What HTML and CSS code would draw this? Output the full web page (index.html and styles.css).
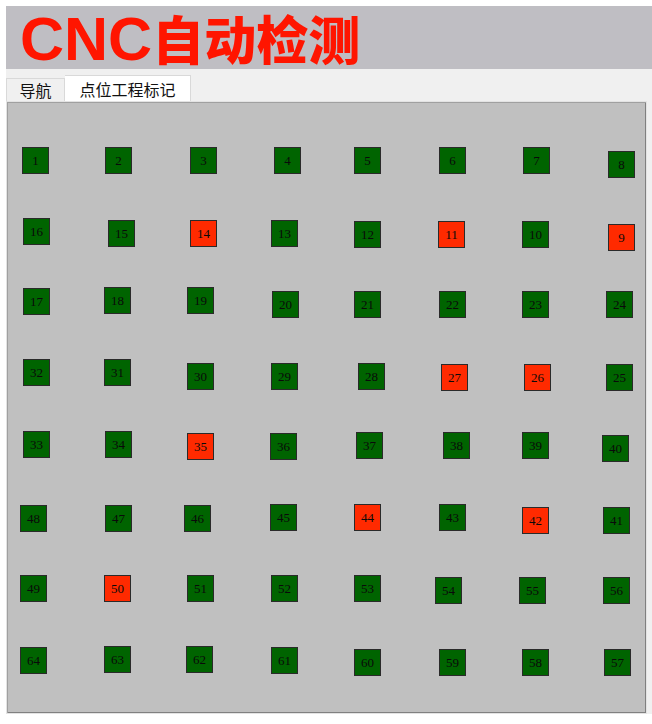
FILE: index.html
```html
<!DOCTYPE html>
<html lang="zh">
<head>
<meta charset="utf-8">
<title>CNC自动检测</title>
<link rel="stylesheet" href="styles.css">
</head>
<body>
<div class="app">
  <header class="header">
    <h1 class="title"><span class="latin">CNC</span><span class="cjk">自动检测</span></h1>
  </header>
  <div class="window">
    <div class="tabs">
      <div class="tab">导航</div>
      <div class="tab active">点位工程标记</div>
    </div>
    <div class="panel">
      <div class="pt" style="left:15px;top:45px">1</div>
      <div class="pt" style="left:98px;top:45px">2</div>
      <div class="pt" style="left:183px;top:45px">3</div>
      <div class="pt" style="left:267px;top:45px">4</div>
      <div class="pt" style="left:347px;top:45px">5</div>
      <div class="pt" style="left:432px;top:45px">6</div>
      <div class="pt" style="left:516px;top:45px">7</div>
      <div class="pt" style="left:601px;top:49px">8</div>

      <div class="pt" style="left:16px;top:116px">16</div>
      <div class="pt" style="left:101px;top:118px">15</div>
      <div class="pt bad" style="left:183px;top:118px">14</div>
      <div class="pt" style="left:264px;top:118px">13</div>
      <div class="pt" style="left:347px;top:119px">12</div>
      <div class="pt bad" style="left:431px;top:119px">11</div>
      <div class="pt" style="left:515px;top:119px">10</div>
      <div class="pt bad" style="left:601px;top:122px">9</div>

      <div class="pt" style="left:16px;top:186px">17</div>
      <div class="pt" style="left:97px;top:185px">18</div>
      <div class="pt" style="left:180px;top:185px">19</div>
      <div class="pt" style="left:265px;top:189px">20</div>
      <div class="pt" style="left:347px;top:189px">21</div>
      <div class="pt" style="left:432px;top:189px">22</div>
      <div class="pt" style="left:515px;top:189px">23</div>
      <div class="pt" style="left:599px;top:189px">24</div>

      <div class="pt" style="left:16px;top:257px">32</div>
      <div class="pt" style="left:97px;top:257px">31</div>
      <div class="pt" style="left:180px;top:261px">30</div>
      <div class="pt" style="left:264px;top:261px">29</div>
      <div class="pt" style="left:351px;top:261px">28</div>
      <div class="pt bad" style="left:434px;top:262px">27</div>
      <div class="pt bad" style="left:517px;top:262px">26</div>
      <div class="pt" style="left:599px;top:262px">25</div>

      <div class="pt" style="left:16px;top:329px">33</div>
      <div class="pt" style="left:98px;top:329px">34</div>
      <div class="pt bad" style="left:180px;top:331px">35</div>
      <div class="pt" style="left:263px;top:331px">36</div>
      <div class="pt" style="left:349px;top:330px">37</div>
      <div class="pt" style="left:436px;top:330px">38</div>
      <div class="pt" style="left:515px;top:330px">39</div>
      <div class="pt" style="left:595px;top:333px">40</div>

      <div class="pt" style="left:13px;top:403px">48</div>
      <div class="pt" style="left:98px;top:403px">47</div>
      <div class="pt" style="left:177px;top:403px">46</div>
      <div class="pt" style="left:263px;top:402px">45</div>
      <div class="pt bad" style="left:347px;top:402px">44</div>
      <div class="pt" style="left:432px;top:402px">43</div>
      <div class="pt bad" style="left:515px;top:405px">42</div>
      <div class="pt" style="left:596px;top:405px">41</div>

      <div class="pt" style="left:13px;top:473px">49</div>
      <div class="pt bad" style="left:97px;top:473px">50</div>
      <div class="pt" style="left:180px;top:473px">51</div>
      <div class="pt" style="left:264px;top:473px">52</div>
      <div class="pt" style="left:347px;top:473px">53</div>
      <div class="pt" style="left:428px;top:475px">54</div>
      <div class="pt" style="left:512px;top:475px">55</div>
      <div class="pt" style="left:596px;top:475px">56</div>

      <div class="pt" style="left:13px;top:545px">64</div>
      <div class="pt" style="left:97px;top:544px">63</div>
      <div class="pt" style="left:179px;top:544px">62</div>
      <div class="pt" style="left:264px;top:545px">61</div>
      <div class="pt" style="left:347px;top:547px">60</div>
      <div class="pt" style="left:432px;top:547px">59</div>
      <div class="pt" style="left:515px;top:547px">58</div>
      <div class="pt" style="left:597px;top:547px">57</div>
    </div>
  </div>
</div>
</body>
</html>
```
FILE: styles.css
```css
html, body {
  margin: 0;
  padding: 0;
  background: #ffffff;
}
.app {
  width: 652px;
  height: 724px;
  padding: 6px 0 0 6px;
  box-sizing: border-box;
  font-family: "Noto Sans CJK SC", "Noto Sans", sans-serif;
}
.header {
  height: 63px;
  background: #bfbec3;
  box-sizing: border-box;
  padding-left: 14px;
  display: flex;
  align-items: center;
}
.title {
  margin: 0;
  color: #ff1500;
  font-weight: bold;
  line-height: 60px;
  height: 60px;
  white-space: nowrap;
  display: flex;
  align-items: baseline;
}
.title .latin {
  font-family: "Liberation Sans", Arial, sans-serif;
  font-size: 61px;
}
.title .cjk {
  font-family: "Noto Sans CJK SC", sans-serif;
  font-size: 52px;
  font-weight: 900;
}
.window {
  background: #f0f0f0;
  height: 645px;
  padding-right: 5px;
  box-sizing: border-box;
}
.tabs {
  height: 32px;
  display: flex;
  align-items: flex-end;
  box-sizing: border-box;
}
.tab {
  height: 23px;
  width: 59px;
  box-sizing: border-box;
  padding: 0;
  border: 1px solid #d9d9d9;
  border-bottom: none;
  background: #f0f0f0;
  font-size: 16px;
  line-height: 22px;
  color: #111;
  text-align: center;
}
.tab.active {
  height: 26px;
  width: 126px;
  background: #ffffff;
  line-height: 26px;
  border-left: none;
}
.panel {
  position: relative;
  height: 613px;
  box-sizing: border-box;
  border: 1px solid #e3e3e3;
  box-shadow: inset 1px 1px 0 #a0a0a0, inset -1px -1px 0 #808080;
  background: #c0c0c0;
}
.pt {
  position: absolute;
  width: 27px;
  height: 27px;
  box-sizing: border-box;
  border: 1px solid #2a2a2a;
  background: #006400;
  color: #0a0a0a;
  font-family: "Liberation Serif", "Times New Roman", serif;
  font-size: 13px;
  line-height: 25px;
  text-align: center;
}
.pt.bad {
  background: #ff2a00;
}
```
